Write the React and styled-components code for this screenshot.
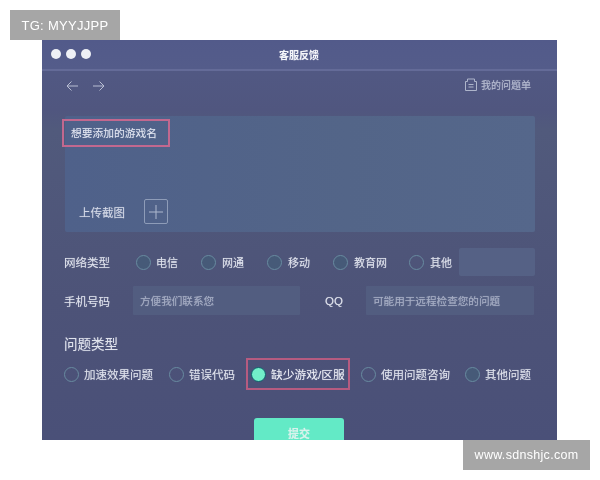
import React from "react";
import styled, { createGlobalStyle } from "styled-components";

const Global = createGlobalStyle`
  html, body { margin: 0; padding: 0; background: #fff; }
  body { font-family: "Liberation Sans", "Noto Sans CJK SC", sans-serif; }
`;
const Page = styled.div`
  width: 600px; height: 480px; overflow: hidden; display: flex; flex-direction: column; background: #fff;
`;
const Mark = styled.div`
  height: 30px; background: #a6a6a6; color: #fff; font-size: ${p => p.$s}px; letter-spacing: .3px;
  display: flex; align-items: center; justify-content: center; flex: none; box-sizing: border-box;
  width: ${p => p.$w}px; margin-left: ${p => p.$x}px; margin-top: ${p => p.$t || 0}px;
  font-family: "Liberation Sans", sans-serif; filter: blur(.3px);
`;
const Win = styled.div`
  flex: none; width: 515px; height: 400px; margin-left: 42px; overflow: hidden; display: flex; flex-direction: column;
  background: linear-gradient(#525a86 0, #50567f 70px, #515a7c 90px, #4d5378 260px, #4a5078 400px);
  color: #d9dde9; font-size: 11px; filter: blur(.4px);
  text-shadow: 0 0 1px rgba(235, 238, 248, .45);
`;
const TitleBar = styled.div`
  height: 29px; flex: none; display: flex; align-items: center; padding: 0 0 0 9px; position: relative;
  background: linear-gradient(#525a8a, #545c8a); border-bottom: 2px solid #646b98;
`;
const Dots = styled.div`display: flex; gap: 5px; margin-top: -1px;`;
const Dot = styled.span`width: 10px; height: 10px; border-radius: 50%; background: #eef0f6;`;
const Title = styled.div`
  position: absolute; left: 0; right: 0; text-align: center; color: #f4f5fa; font-size: 10px; font-weight: 700; margin-top: -1px; padding-right: 1px; box-sizing: border-box;
`;
const Tools = styled.div`
  height: 30px; flex: none; display: flex; align-items: center; padding: 0 26px 0 23px; color: #b9bfd3;
`;
const Arrows = styled.div`display: flex; gap: 13px; color: #b8bed3;`;
const Spacer = styled.div`flex: 1;`;
const MyList = styled.div`display: flex; align-items: center; gap: 4px; font-size: 10px; color: #b5bbd0; margin-top: -3px;`;
const Editor = styled.div`
  flex: none; margin: 15px 22px 0 23px; height: 116px; background: linear-gradient(90deg,#4f618a,#536588 60%,#55678b); border-radius: 2px;
  display: flex; flex-direction: column; box-sizing: border-box; padding: 3px 0 8px 0;
`;
const NameTag = styled.div`
  box-sizing: border-box; width: 108px; height: 28px; margin-left: -3px; border: 2px solid #c2688f; display: flex; align-items: center; padding: 0 0 2px 7px; font-size: 10.75px; color: #e0e4f0;
`;
const Upload = styled.div`
  margin-top: auto; display: flex; align-items: center; gap: 19px; padding-left: 14px; font-size: 11.5px; color: #d3d8e6;
`;
const Plus = styled.div`
  width: 24px; height: 25px; box-sizing: border-box; border: 1px solid #8e9cb8; border-radius: 2px; display: flex; align-items: center; justify-content: center; color: #aeb8ce;
`;
const NetRow = styled.div`
  flex: none; height: 28px; margin-top: 16px; display: flex; align-items: center; padding-left: 22px;
`;
const Label = styled.div`
  width: ${p => p.$w}px; flex: none; color: #dfe2ec; font-size: 11.5px; margin-left: ${p => p.$l || 0}px;
`;
const Radio = styled.div`
  display: flex; align-items: center; gap: ${p => p.$gap || 6}px; flex: none; width: ${p => p.$w}px; font-size: ${p => p.$s || 11}px; color: #dfe2ec; white-space: nowrap;
`;
const Circle = styled.span`
  width: 15px; height: 15px; box-sizing: border-box; border-radius: 50%; flex: none;
  border: 1.5px solid ${p => p.$on ? "#0f5f6c" : "#688ba0"};
  background: ${p => p.$on ? "#72efc9" : p.$dark ? "#465a78" : "transparent"};
`;
const SmallBox = styled.div`
  width: 76px; height: 28px; background: #556185; border-radius: 2px; flex: none;
`;
const FieldRow = styled.div`
  flex: none; height: 29px; margin-top: 10px; display: flex; align-items: center; padding-left: 22px;
`;
const Input = styled.div`
  width: ${p => p.$w}px; height: 29px; background: #525d80; border-radius: 1px; display: flex; align-items: center; padding-left: 7px; box-sizing: border-box; flex: none; font-size: 10.6px; color: #a3abc2;
`;
const Section = styled.div`
  flex: none; margin: 21px 0 0 22px; font-size: 13.5px; color: #dfe2ec; line-height: 18px;
`;
const TypeRow = styled.div`
  flex: none; height: 32px; margin-top: 4px; display: flex; align-items: center; padding-left: 22px;
`;
const Picked = styled.div`
  flex: none; width: 104px; height: 32px; box-sizing: border-box; border: 2px solid #b65b80; display: flex; align-items: center; gap: 5px; padding-left: 3px; font-size: 11.75px; color: #eceef5; white-space: nowrap; margin-right: 11px;
`;
const PickedText = styled.span`margin-bottom: 2px;`;
const Submit = styled.div`
  flex: none; width: 90px; height: 30px; margin: 28px 0 0 212px; background: #63eac6; border-radius: 3px 3px 0 0; display: flex; align-items: center; justify-content: center; color: #d8f3ec; font-size: 11px; font-weight: 700;
`;

const Arrow = ({ flip }) => (
  <svg width="14" height="12" viewBox="0 0 14 12" fill="none" stroke="currentColor" strokeWidth="1" style={flip ? { transform: "scaleX(-1)" } : undefined}>
    <path d="M13 6H2M6.5 1.5 2 6l4.5 4.5" />
  </svg>
);

export default function App() {
  return (
    <Page>
      <Global />
      <Mark $w={110} $x={10} $t={10} $s={13}>TG: MYYJJPP</Mark>
      <Win>
        <TitleBar>
          <Dots><Dot /><Dot /><Dot /></Dots>
          <Title>客服反馈</Title>
        </TitleBar>
        <Tools>
          <Arrows><Arrow /><Arrow flip /></Arrows>
          <Spacer />
          <MyList>
            <svg width="12" height="13" viewBox="0 0 12 13" fill="none" stroke="#aeb5cb" strokeWidth="1">
              <path d="M.5 3.5h2V1h7v2.5h2v9H.5zM3.5 6.5h5M3.5 9h5" />
            </svg>
            我的问题单
          </MyList>
        </Tools>
        <Editor>
          <NameTag>想要添加的游戏名</NameTag>
          <Upload>
            上传截图
            <Plus>
              <svg width="14" height="14" viewBox="0 0 14 14" stroke="currentColor" strokeWidth="1"><path d="M7 0v14M0 7h14" /></svg>
            </Plus>
          </Upload>
        </Editor>
        <NetRow>
          <Label $w={72}>网络类型</Label>
          <Radio $w={65} $gap={5}><Circle $dark />电信</Radio>
          <Radio $w={66}><Circle $dark />网通</Radio>
          <Radio $w={66}><Circle $dark />移动</Radio>
          <Radio $w={76}><Circle $dark />教育网</Radio>
          <Radio $w={50}><Circle />其他</Radio>
          <SmallBox />
        </NetRow>
        <FieldRow>
          <Label $w={69}>手机号码</Label>
          <Input $w={167}>方便我们联系您</Input>
          <Label $w={41} $l={25}>QQ</Label>
          <Input $w={168}>可能用于远程检查您的问题</Input>
        </FieldRow>
        <Section>问题类型</Section>
        <TypeRow>
          <Radio $w={105} $gap={5} $s={11.5}><Circle />加速效果问题</Radio>
          <Radio $w={77} $gap={5} $s={11.5}><Circle />错误代码</Radio>
          <Picked><Circle $on /><PickedText>缺少游戏/区服</PickedText></Picked>
          <Radio $w={104} $gap={5} $s={11.5}><Circle />使用问题咨询</Radio>
          <Radio $w={70} $gap={5} $s={11.5}><Circle $dark />其他问题</Radio>
        </TypeRow>
        <Submit>提交</Submit>
      </Win>
      <Mark $w={127} $x={463} $s={12.5}>www.sdnshjc.com</Mark>
    </Page>
  );
}
